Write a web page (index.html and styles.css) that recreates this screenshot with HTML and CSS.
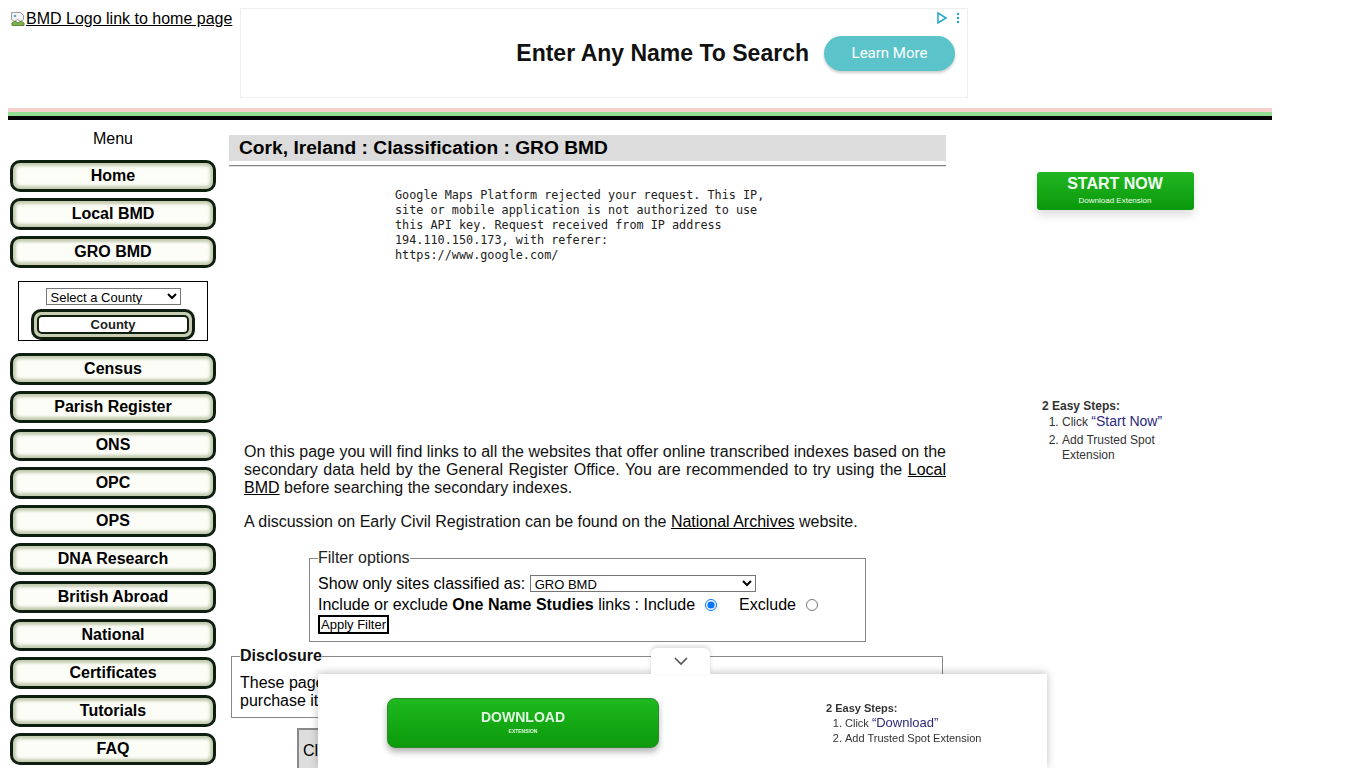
FILE: index.html
```html
<!DOCTYPE html>
<html lang="en">
<head>
    <meta charset="UTF-8">
    <meta name="viewport" content="width=device-width, initial-scale=1.0">
    <title>Cork, Ireland : Classification : GRO BMD</title>
    <link rel="stylesheet" href="styles.css">
</head>
<body>
    <div class="header">
        <a class="logo" href="/">
            <svg class="broken-img" width="16" height="16" viewBox="0 0 16 16">
                <path d="M1.5 1.5h9l3 3v4l-3 2-3-2-3 2-3-2z" fill="#f4f4f4" stroke="#9a9a9a"/>
                <path d="M2 12l3-2 3 2 3-2 3 2v2.5H2z" fill="#7bb04a" stroke="#5a8a3a"/>
                <circle cx="5" cy="5" r="1.3" fill="#6aa0d8"/>
            </svg>BMD Logo link to home page</a>
        <div class="top-ad">
            <svg class="adchoices" width="26" height="14" viewBox="0 0 26 14">
                <path d="M2 2l8 5-8 5z" fill="none" stroke="#1fa6cf" stroke-width="1.5"/>
                <circle cx="22" cy="3" r="1.2" fill="#1fa6cf"/>
                <circle cx="22" cy="7" r="1.2" fill="#1fa6cf"/>
                <circle cx="22" cy="11" r="1.2" fill="#1fa6cf"/>
            </svg>
            <span class="ad-title">Enter Any Name To Search</span>
            <a class="ad-btn" href="#">Learn More</a>
        </div>
    </div>
    <div class="stripe"></div>

    <div class="page">
        <div class="menu">
            <div class="menu-title">Menu</div>
            <a class="menu-btn" href="/">Home</a>
            <a class="menu-btn" href="/local">Local BMD</a>
            <a class="menu-btn" href="/gro">GRO BMD</a>
            <div class="county-box">
                <select class="county-select">
                    <option>Select a County</option>
                </select>
                <div class="county-ring"><button class="county-btn">County</button></div>
            </div>
            <a class="menu-btn" href="/census">Census</a>
            <a class="menu-btn" href="/parish">Parish Register</a>
            <a class="menu-btn" href="/ons">ONS</a>
            <a class="menu-btn" href="/opc">OPC</a>
            <a class="menu-btn" href="/ops">OPS</a>
            <a class="menu-btn" href="/dna">DNA Research</a>
            <a class="menu-btn" href="/abroad">British Abroad</a>
            <a class="menu-btn" href="/national">National</a>
            <a class="menu-btn" href="/certificates">Certificates</a>
            <a class="menu-btn" href="/tutorials">Tutorials</a>
            <a class="menu-btn" href="/faq">FAQ</a>
        </div>

        <div class="main">
            <h1 class="page-title">Cork, Ireland : Classification : GRO BMD</h1>
            <hr class="title-rule">
            <div class="map">
                <div class="map-error">Google Maps Platform rejected your request. This IP,
site or mobile application is not authorized to use
this API key. Request received from IP address
194.110.150.173, with referer:
https://www.google.com/</div>
            </div>
            <p class="intro">On this page you will find links to all the websites that offer online transcribed indexes based on the secondary data held by the General Register Office. You are recommended to try using the <a href="/local">Local BMD</a> before searching the secondary indexes.</p>
            <p class="intro">A discussion on Early Civil Registration can be found on the <a href="#">National Archives</a> website.</p>

            <fieldset class="filter">
                <legend>Filter options</legend>
                <div class="filter-row">Show only sites classified as:&nbsp;<select class="class-select"><option>GRO BMD</option></select></div>
                <div class="filter-row">Include or exclude&nbsp;<b>One Name Studies</b>&nbsp;links : Include<input type="radio" name="ons" checked><span class="exclude">Exclude</span><input type="radio" name="ons"></div>
                <button class="apply-btn">Apply Filter</button>
            </fieldset>

            <fieldset class="disclosure">
                <legend>Disclosure</legend>
                <p>These pages contain affiliate links. If you follow a link to a site and find a record you want to<br>purchase it may earn this site a small commission at no extra cost to you.</p>
            </fieldset>

            <table class="sites">
                <tr><th>Classification</th><th>Site</th><th>Description</th></tr>
            </table>
        </div>

        <div class="side">
            <div class="side-ad">
                <a class="start-btn" href="#">START NOW<span>Download Extension</span></a>
                <div class="steps side-steps">
                    <b>2 Easy Steps:</b>
                    <ol>
                        <li>Click <span class="quote">“Start Now”</span></li>
                        <li>Add Trusted Spot Extension</li>
                    </ol>
                </div>
            </div>
        </div>
    </div>

    <div class="bottom-ad">
        <div class="bottom-tab">
            <svg width="16" height="10" viewBox="0 0 16 10"><path d="M2 2l6 6 6-6" fill="none" stroke="#555" stroke-width="1.6"/></svg>
        </div>
        <a class="download-btn" href="#">DOWNLOAD<span>EXTENSION</span></a>
        <div class="steps bottom-steps">
            <b>2 Easy Steps:</b>
            <ol>
                <li>Click <span class="quote">“Download”</span></li>
                <li>Add Trusted Spot Extension</li>
            </ol>
        </div>
    </div>
</body>
</html>
```

FILE: styles.css
```css
body {
    margin: 8px;
    font-family: "Liberation Sans", Arial, sans-serif;
    font-size: 16px;
    color: #000;
    background-color: #fff;
}
a {
    color: #000;
}
.header {
    display: flex;
    align-items: flex-start;
    height: 90px;
    margin-bottom: 10px;
}
.logo {
    display: flex;
    align-items: center;
    margin: 2px 0 0 2px;
    width: 230px;
    line-height: 18px;
}
.top-ad {
    position: relative;
    box-sizing: border-box;
    width: 728px;
    height: 90px;
    border: 1px solid #eee;
    display: flex;
    align-items: center;
    justify-content: flex-end;
    padding-right: 12px;
    gap: 15px;
}
.adchoices {
    position: absolute;
    top: 2px;
    right: 5px;
}
.ad-title {
    font-weight: bold;
    font-size: 23px;
    color: #111;
}
.ad-btn {
    width: 131px;
    height: 35px;
    border-radius: 18px;
    background-color: #5bc4ca;
    color: #fff;
    font-family: Roboto, sans-serif;
    font-size: 15px;
    text-decoration: none;
    display: flex;
    align-items: center;
    justify-content: center;
    box-shadow: 0 2px 3px rgba(0, 0, 0, 0.2);
}
.stripe {
    width: 1264px;
    height: 4px;
    background-color: #f6d0cc;
    border-bottom: 4px solid #92dd92;
    box-shadow: 0 4px 0 #000;
    margin-bottom: 12px;
}
.page {
    display: flex;
    align-items: flex-start;
    width: 1264px;
}
.menu {
    width: 210px;
    display: flex;
    flex-direction: column;
    align-items: center;
    flex-shrink: 0;
}
.menu-title {
    line-height: 18px;
    margin: 2px 0 12px;
}
.menu-btn {
    box-sizing: border-box;
    width: 206px;
    height: 32px;
    margin-bottom: 6px;
    border: 3px solid #0f1f0f;
    border-radius: 10px;
    background-color: #fcfdf7;
    box-shadow: inset 0 0 3px 3px #c3cbb0;
    font-weight: bold;
    font-size: 16px;
    text-decoration: none;
    color: #000;
    display: flex;
    align-items: center;
    justify-content: center;
}
.county-box {
    box-sizing: border-box;
    width: 190px;
    height: 60px;
    margin: 7px 0 12px;
    border: 1px solid #000;
    display: flex;
    flex-direction: column;
    align-items: center;
    padding-top: 6px;
}
.county-select {
    width: 135px;
    height: 17px;
    font-family: "Liberation Sans", Arial, sans-serif;
    font-size: 13px;
    padding: 0;
    border: 1px solid #767676;
    border-radius: 0;
    background-color: #fff;
}
.county-ring {
    box-sizing: border-box;
    width: 164px;
    height: 31px;
    margin-top: 4px;
    border: 3px solid #0f1f0f;
    border-radius: 10px;
    background-color: #c6cdb2;
    padding: 3px;
}
.county-btn {
    width: 100%;
    height: 100%;
    border: 2px solid #0f1f0f;
    border-radius: 5px;
    background-color: #fff;
    font-family: "Liberation Sans", Arial, sans-serif;
    font-size: 13px;
    font-weight: bold;
    padding: 0;
    color: #222;
}
.main {
    width: 717px;
    margin-left: 11px;
    flex-shrink: 0;
}
.page-title {
    margin: 7px 0 0;
    background-color: #dcdcdc;
    font-size: 19.2px;
    line-height: 26px;
    padding: 0 10px;
}
.title-rule {
    margin: 4px 0 0;
    border: none;
    border-top: 1px solid #888;
    border-bottom: 1px solid #ddd;
}
.map {
    height: 276px;
    margin-left: 15px;
    padding-top: 21px;
    box-sizing: border-box;
}
.map-error {
    width: 400px;
    margin: 0 auto;
    white-space: pre;
    font-family: "DejaVu Sans Mono", monospace;
    font-size: 11.8px;
    line-height: 15px;
    color: #222;
}
.intro {
    margin: 0 0 16px 15px;
    line-height: 18px;
    text-align: justify;
    color: #111;
}
.filter {
    width: 557px;
    box-sizing: border-box;
    margin: 18px auto 0;
    border: 1px solid #888;
    padding: 0 8px 7px;
}
.filter legend {
    padding: 0;
    line-height: 18px;
    color: #222;
}
.filter-row {
    height: 21px;
    display: flex;
    align-items: center;
    white-space: nowrap;
}
.filter-row:first-of-type {
    margin-top: 6px;
}
.class-select {
    width: 226px;
    height: 17px;
    font-family: "Liberation Sans", Arial, sans-serif;
    font-size: 13px;
    padding: 0;
    border: 1px solid #767676;
    border-radius: 0;
    background-color: #fff;
}
.filter-row input {
    margin: 0 0 0 10px;
    width: 12px;
    height: 12px;
}
.exclude {
    margin-left: 22px;
}
.apply-btn {
    display: block;
    font-family: "Liberation Sans", Arial, sans-serif;
    font-size: 13px;
    border: 2px solid #000;
    background-color: #fff;
    padding: 0 1px;
    height: 19px;
    margin-top: 0;
}
.disclosure {
    margin: 5px 3px 0 2px;
    border: 1px solid #888;
    padding: 0 8px 7px;
}
.disclosure legend {
    font-weight: bold;
    padding: 0;
    line-height: 18px;
    color: #111;
}
.disclosure p {
    margin: 9px 0 0;
    line-height: 18px;
}
.sites {
    margin: 10px 0 0 68px;
    border: 2px solid #888;
    border-collapse: collapse;
}
.sites th {
    background-color: #ddd;
    font-weight: normal;
    text-align: left;
    padding: 12px 4px 40px;
}
.side {
    flex: 1;
    display: flex;
    justify-content: center;
    padding-left: 12px;
}
.side-ad {
    width: 160px;
    margin-top: 44px;
    display: flex;
    flex-direction: column;
    align-items: center;
}
.start-btn {
    width: 157px;
    height: 38px;
    border-radius: 3px;
    background: linear-gradient(#22b622, #0a980a);
    box-shadow: 0 6px 8px rgba(0, 0, 0, 0.12);
    color: #f2fff2;
    text-decoration: none;
    font-weight: bold;
    font-size: 16px;
    line-height: 18px;
    display: flex;
    flex-direction: column;
    align-items: center;
    justify-content: center;
    padding-bottom: 1px;
    box-sizing: border-box;
}
.start-btn span {
    font-size: 8px;
    line-height: 10px;
    font-weight: normal;
    margin-top: 3px;
}
.steps {
    color: #333;
}
.steps ol {
    margin: 0;
    padding-left: 20px;
}
.quote {
    color: #2b2a7d;
}
.side-steps {
    align-self: stretch;
    margin-top: 188px;
    padding-left: 7px;
    font-size: 12px;
    line-height: 16px;
}
.side-steps ol {
    width: 108px;
}
.side-steps li {
    line-height: 15px;
}
.side-steps li + li {
    margin-top: 3px;
}
.side-steps .quote {
    font-size: 14px;
}
.bottom-ad {
    position: fixed;
    left: 318px;
    bottom: 0;
    width: 729px;
    height: 94px;
    background-color: #fff;
    box-shadow: 0 -1px 8px rgba(0, 0, 0, 0.25);
    display: flex;
    align-items: flex-start;
}
.bottom-tab {
    position: absolute;
    top: -26px;
    left: 333px;
    width: 59px;
    height: 26px;
    background-color: #fff;
    border-radius: 6px 6px 0 0;
    box-shadow: 0 -2px 4px rgba(0, 0, 0, 0.15);
    display: flex;
    align-items: center;
    justify-content: center;
}
.download-btn {
    box-sizing: border-box;
    width: 272px;
    height: 50px;
    margin: 24px 0 0 69px;
    border: 1px solid #2d8a2d;
    border-radius: 8px;
    background: linear-gradient(#1fb91f, #0b9a0b);
    box-shadow: 0 4px 6px rgba(0, 0, 0, 0.3);
    color: #e2f7e2;
    text-decoration: none;
    font-weight: bold;
    font-size: 14px;
    line-height: 16px;
    display: flex;
    flex-direction: column;
    align-items: center;
    justify-content: center;
    padding-bottom: 2px;
}
.download-btn span {
    font-size: 5px;
    line-height: 8px;
    margin-top: 2px;
}
.bottom-steps {
    margin: 27px 0 0 167px;
    font-size: 11px;
    line-height: 14px;
}
.bottom-steps ol {
    padding-left: 19px;
}
.bottom-steps li {
    line-height: 15px;
}
.bottom-steps .quote {
    font-size: 13px;
}
```
